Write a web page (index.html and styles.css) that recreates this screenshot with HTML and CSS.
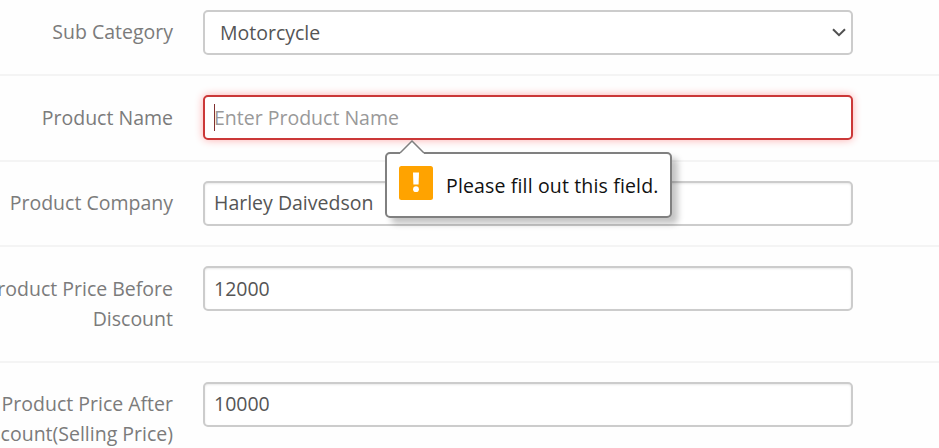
FILE: index.html
```html
<!DOCTYPE html>
<html lang="en">
<head>
<meta charset="utf-8">
<title>Insert Product</title>
<link rel="stylesheet" href="styles.css">
</head>
<body>
<form class="form" novalidate>
  <div class="row row-first">
    <label class="label">Sub Category</label>
    <div class="control control-select"><span class="value">Motorcycle</span>
      <svg class="chevron" width="14" height="9" viewBox="0 0 14 9"><path d="M1 1.2 7 7.2 13 1.2" fill="none" stroke="#505050" stroke-width="2"/></svg>
    </div>
  </div>
  <div class="row row-name">
    <label class="label">Product Name</label>
    <div class="control control-invalid"><span class="caret"></span><span class="placeholder">Enter Product Name</span>
      <div class="tooltip" role="alert">
        <svg class="arrow" width="26" height="15" viewBox="0 0 26 15"><path d="M1 15V13L13 1 25 13V15Z" fill="#fff"/><path d="M1 13 13 1 25 13" fill="none" stroke="#808080" stroke-width="1.5"/></svg>
        <svg class="warning" width="34" height="34" viewBox="0 0 34 34"><rect width="34" height="34" rx="2.5" fill="#ffa300"/><path d="M14 6.5h6l-.4 12h-5.2z" fill="#fff"/><circle cx="17" cy="23.2" r="2.9" fill="#fff"/></svg>
        <span class="message">Please fill out this field.</span>
      </div>
    </div>
  </div>
  <div class="row row-company">
    <label class="label">Product Company</label>
    <div class="control"><span class="value">Harley Daivedson</span></div>
  </div>
  <div class="row row-before">
    <label class="label">Product Price Before<br>Discount</label>
    <div class="control"><span class="value">12000</span></div>
  </div>
  <div class="row row-after">
    <label class="label">Product Price After<br>Discount(Selling Price)</label>
    <div class="control"><span class="value">10000</span></div>
  </div>
</form>
</body>
</html>
```
FILE: styles.css
```css
* { box-sizing: border-box; }
body {
  margin: 0;
  height: 448px;
  overflow: hidden;
  background: #fefefe;
  color: #555;
  font: 19.5px/30px "Open Sans", sans-serif;
}
.form { height: 448px; margin-left: -67px; overflow: hidden; }
.row {
  display: flex;
  align-items: flex-start;
  gap: 30px;
  height: 86px;
  padding-top: 19px;
  border-bottom: 2px solid #f4f4f4;
}
.row-first { height: 76px; padding-top: 10px; }
.row-company { height: 85px; }
.row-before { height: 116px; }
.row-after { height: 85px; border-bottom: 0; }
.label {
  width: 240px;
  flex: none;
  padding-top: 7px;
  text-align: right;
  color: #7b7b7b;
  white-space: nowrap;
}
.row-name .label,
.row-before .label { padding-top: 8px; }
.control {
  position: relative;
  display: flex;
  align-items: center;
  width: 650px;
  height: 45px;
  padding: 0 9px;
  border: 2px solid #ccc;
  border-radius: 5px;
  background: #fff;
  box-shadow: inset 0 1px 2px rgba(0, 0, 0, .09);
}
.row-company .control,
.row-after .control { padding-bottom: 2px; }
.control-select {
  justify-content: space-between;
  padding: 0 5px 0 15px;
  box-shadow: none;
}
.control-invalid {
  border-color: #cb3838;
  box-shadow: 0 0 8px rgba(255, 0, 0, .32);
}
.caret { width: 1px; height: 27px; margin-right: -1px; background: #803030; }
.placeholder { color: #999; }
.tooltip {
  position: absolute;
  z-index: 1;
  left: 180px;
  top: 55px;
  display: flex;
  align-items: center;
  gap: 13px;
  width: 287px;
  height: 66px;
  padding: 0 12px;
  border: 2px solid #808080;
  border-radius: 5px;
  background: #fff;
  box-shadow: 6px 6px 6px rgba(0, 0, 0, .23);
  color: #111;
}
.arrow { position: absolute; left: 12px; top: -14px; }
.warning { flex: none; margin-top: -4px; }
.message {
  padding-top: 2px;
  font-size: 19.5px;
  letter-spacing: .15px;
  white-space: nowrap;
}
```
